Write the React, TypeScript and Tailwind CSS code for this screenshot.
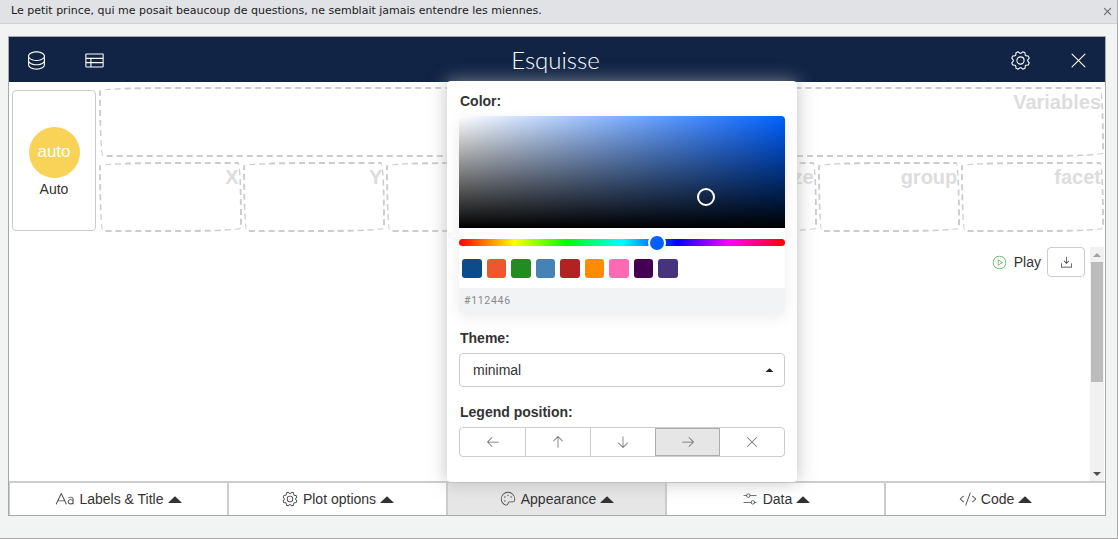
import React from 'react';
import {
  PiDatabaseLight,
  PiTableLight,
  PiGearLight,
  PiXLight,
  PiXBold,
  PiTextAaLight,
  PiPaletteLight,
  PiSlidersHorizontalLight,
  PiCodeLight,
  PiPlayCircleLight,
  PiDownloadSimpleLight,
  PiArrowLeftLight,
  PiArrowUpLight,
  PiArrowDownLight,
  PiArrowRightLight,
} from 'react-icons/pi';

const sketchy = 'border-2 border-dashed border-[#ccc] rounded-[255px_15px_225px_15px/15px_225px_15px_255px]';

const swatches = ['#0C4C8A', '#EF562D', '#228B22', '#4682B4', '#B22222', '#FF8C00', '#FF69B4', '#440154', '#46337E'];

const dropZones = ['X', 'Y', 'fill', 'color', 'size', 'group', 'facet'];

const Caret = ({ className }: { className: string }) => (
  <svg viewBox="0 0 14 7" className={className} fill="currentColor">
    <path d="M7 0.3 L13.6 6.4 Q13.8 7 13 7 L1 7 Q0.2 7 0.4 6.4 Z" />
  </svg>
);

const tabs = [
  { label: 'Labels & Title', icon: <PiTextAaLight className="size-[20px] text-[#444]" /> },
  { label: 'Plot options', icon: <PiGearLight className="size-[18px] text-[#444]" /> },
  { label: 'Appearance', icon: <PiPaletteLight className="size-[18px] text-[#444]" />, active: true },
  { label: 'Data', icon: <PiSlidersHorizontalLight className="size-[18px] text-[#444]" /> },
  { label: 'Code', icon: <PiCodeLight className="size-[18px] text-[#444]" /> },
];

const legendButtons = [
  <PiArrowLeftLight className="size-[16px]" />,
  <PiArrowUpLight className="size-[16px]" />,
  <PiArrowDownLight className="size-[16px]" />,
  <PiArrowRightLight className="size-[16px]" />,
  <PiXLight className="size-[16px]" />,
];

const legendCellBorder = ['', 'border-l border-[#ccc]', 'border-l border-[#ccc]', 'border border-[#adadad] bg-[#e6e6e6]', ''];

const AppearancePopover = () => (
  <div className="absolute left-[438px] top-[44px] z-10 h-[401px] w-[350px] rounded-[4px] bg-white px-3 pt-[12px] shadow-[0_0_18px_rgba(170,170,170,0.75)]">
    <div className="pl-px text-[14px] leading-[16px] font-bold text-[#333]">Color:</div>
    <div className="mt-[7px] overflow-hidden rounded-[4px] shadow-[0_4px_14px_rgba(0,0,0,0.08)]">
      <div className="relative h-[112px] bg-[linear-gradient(to_top,#000,transparent),linear-gradient(to_right,#fff,#0060ff)]">
        <div className="absolute left-[238px] top-[72px] size-[18px] rounded-full border-2 border-white" />
      </div>
      <div className="bg-white pt-[11px]">
        <div className="relative h-[7px] rounded-full bg-[linear-gradient(to_right,#f00,#ff0_17%,#0f0_33%,#0ff_50%,#00f_67%,#f0f_83%,#f00)]">
          <div className="absolute left-[189px] top-[-5px] size-[18px] rounded-full border-2 border-white bg-[#0060ff]" />
        </div>
        <div className="flex h-[42px] items-center gap-[5px] pl-[3px] pt-[3px]">
          {swatches.map((color) => (
            <button key={color} className="size-[19.5px] rounded-[3px]" style={{ backgroundColor: color }} />
          ))}
        </div>
      </div>
      <div className="flex h-[25px] items-center bg-[#f1f3f5] pl-[5px] font-['Roboto',sans-serif] text-[10.5px] tracking-[0.7px] text-[#888]">
        #112446
      </div>
    </div>

    <div className="mt-[17px] pl-px text-[14px] leading-[16px] font-bold text-[#333]">Theme:</div>
    <div className="mt-[7px] flex h-[34px] items-center justify-between rounded-[4px] border border-[#ccc] pl-[13px] pr-[10px] text-[14px] text-[#333]">
      <span>minimal</span>
      <Caret className="h-[4px] w-[9px] text-[#222]" />
    </div>

    <div className="mt-[17px] pl-px text-[14px] leading-[16px] font-bold text-[#333]">Legend position:</div>
    <div className="mt-[7px] grid h-[30px] grid-cols-[65px_65px_65px_65px_64px] overflow-hidden rounded-[4px] border border-[#ccc] text-[#666]">
      {legendButtons.map((icon, i) => (
        <div key={i} className={`flex items-center justify-center ${legendCellBorder[i]}`}>
          {icon}
        </div>
      ))}
    </div>
  </div>
);

const App: React.FC = () => {
  return (
    <div className="flex h-[539px] w-[1118px] flex-col overflow-hidden border-b border-r border-[#a9a9a9] bg-[#f2f4f3] font-['Liberation_Sans',Arial,sans-serif] text-[#333]">
      {/* Notification strip */}
      <div className="flex h-[24px] shrink-0 items-center justify-between border-b border-[#d3d5d4] bg-[#e1e2e6] pl-[11px] pr-[4px] font-['DejaVu_Sans',sans-serif] text-[11px] text-[#1a1a1a]">
        <span>Le petit prince, qui me posait beaucoup de questions, ne semblait jamais entendre les miennes.</span>
        <PiXBold className="size-[11px] text-[#666]" />
      </div>

      <div className="relative ml-[8px] mt-[12px] flex h-[480px] w-[1098px] flex-col border border-[#a8a8a8] bg-white">
        {/* Header */}
        <div className="flex h-[45px] shrink-0 items-center bg-[#112446] pt-px text-white">
          <div className="flex items-center gap-[35px] pl-[16px]">
            <PiDatabaseLight className="size-[23px]" />
            <PiTableLight className="size-[23px]" />
          </div>
          <div className="flex-1 pr-[4px] text-center font-['Lato',sans-serif] text-[24px] font-light">
            Esquisse
          </div>
          <div className="flex items-center gap-[35px] pr-[15px]">
            <PiGearLight className="size-[23px]" />
            <PiXLight className="size-[23px]" />
          </div>
        </div>

        {/* Main area */}
        <div className="flex min-h-0 flex-1 flex-col">
          <div className="flex shrink-0 pl-[3px] pr-[1px]">
            <div className="mt-[8px] flex h-[141px] w-[84px] shrink-0 flex-col items-center justify-center rounded-[4px] border border-[#ccc] pt-[4px]">
              <div className="flex size-[51px] items-center justify-center rounded-full bg-[#f8d358] text-[17px] text-white">
                auto
              </div>
              <div className="mt-[1px] text-[14px] leading-[20px]">Auto</div>
            </div>
            <div className="ml-[3px] flex-1 pt-[5px]">
              <div className={`h-[70px] pr-[1px] text-right text-[20px] leading-[26px] font-bold text-[#ddd] ${sketchy}`}>
                Variables
              </div>
              <div className="mt-[5px] grid h-[70px] grid-cols-7 gap-px">
                {dropZones.map((zone) => (
                  <div key={zone} className={`pr-[1px] text-right text-[20px] leading-[26px] font-bold text-[#ddd] ${sketchy}`}>
                    {zone}
                  </div>
                ))}
              </div>
            </div>
          </div>

          <div className="mt-[15px] flex min-h-0 flex-1 pr-[1px]">
            <div className="flex flex-1 items-start justify-end gap-[6px] pr-[5px]">
              <div className="flex h-[30px] items-center gap-[6px] text-[14px]">
                <PiPlayCircleLight className="size-[17px] text-[#5cb85c]" />
                <span>Play</span>
              </div>
              <div className="flex h-[30px] w-[38px] items-center justify-center rounded-[4px] border border-[#ccc]">
                <PiDownloadSimpleLight className="size-[15px] text-[#333]" />
              </div>
            </div>
            <div className="flex w-[14px] flex-col items-center bg-[#f1f1f1]">
              <div className="flex h-[15px] items-center justify-center">
                <div className="h-0 w-0 border-x-[4px] border-b-[4px] border-x-transparent border-b-[#a3a3a3]" />
              </div>
              <div className="h-[120px] w-[12px] bg-[#bcbcbc]" />
              <div className="flex flex-1 items-end justify-center pb-[5px]">
                <div className="h-0 w-0 border-x-[4px] border-t-[4px] border-x-transparent border-t-[#505050]" />
              </div>
            </div>
          </div>
        </div>

        {/* Bottom tabs */}
        <div className="grid h-[34px] shrink-0 grid-cols-5 border-l border-t-2 border-[#ccc]">
          {tabs.map((tab, i) => (
            <div
              key={tab.label}
              className={`flex items-center justify-center gap-[4px] text-[14px] ${i < 4 ? 'border-r-2 border-[#ccc]' : ''} ${tab.active ? 'bg-[#e6e6e6]' : ''}`}
            >
              {tab.icon}
              <span>{tab.label}</span>
              <Caret className="h-[7px] w-[14px] text-[#333]" />
            </div>
          ))}
        </div>

        <AppearancePopover />
      </div>
    </div>
  );
};

export default App;
